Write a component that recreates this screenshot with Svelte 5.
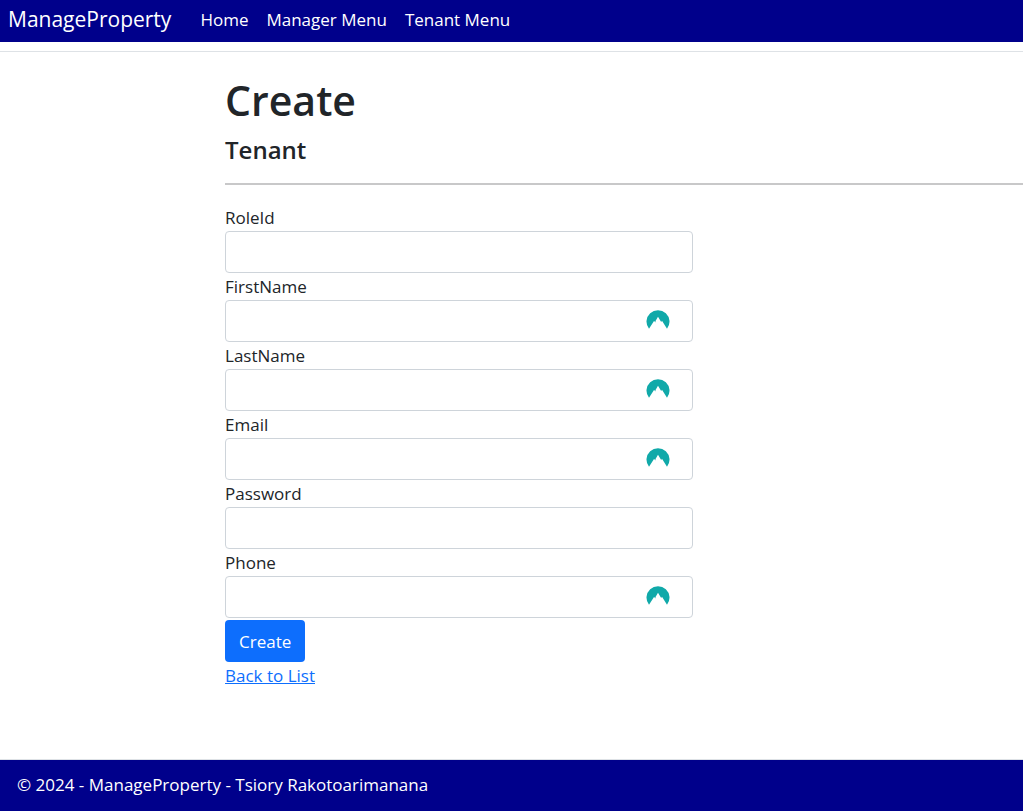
<script>
  const links = ['Home', 'Manager Menu', 'Tenant Menu'];
  const fields = [
    { name: 'RoleId', type: 'text', badge: false },
    { name: 'FirstName', type: 'text', badge: true },
    { name: 'LastName', type: 'text', badge: true },
    { name: 'Email', type: 'email', badge: true },
    { name: 'Password', type: 'password', badge: false },
    { name: 'Phone', type: 'tel', badge: true }
  ];
</script>

<div class="page">
  <header>
    <nav>
      <a class="brand" href="#home">ManageProperty</a>
      {#each links as link}
        <a class="nav-link" href="#{link.replace(' ', '-')}">{link}</a>
      {/each}
    </nav>
  </header>

  <main>
    <h1>Create</h1>
    <h4>Tenant</h4>
    <hr />
    <form onsubmit={(e) => e.preventDefault()}>
      {#each fields as field}
        <div class="field">
          <label for={field.name}>{field.name}</label>
          <div class="control">
            <input id={field.name} name={field.name} type={field.type} autocomplete="off" />
            {#if field.badge}
              <svg class="badge" viewBox="0 0 24 20" aria-hidden="true">
                <path
                  fill="#10a9a9"
                  d="M3 18.800A11.500 11.500 0 1 1 21 18.800L16 10.800 15.200 12 12 6.800 9.400 11.200 9.800 12.600 8 11Z"
                />
              </svg>
            {/if}
          </div>
        </div>
      {/each}
      <button type="submit">Create</button>
    </form>
    <a class="back" href="#list">Back to List</a>
  </main>

  <footer>© 2024 - ManageProperty - Tsiory Rakotoarimanana</footer>
</div>

<style>
  :global(body) {
    margin: 0;
    background: #fff;
  }

  .page {
    display: flex;
    flex-direction: column;
    min-height: 100vh;
    color: #212529;
    font-family: 'Segoe UI', 'Open Sans', 'Noto Sans', sans-serif;
    font-size: 17px;
    line-height: 27px;
  }

  header {
    padding-bottom: 9px;
    border-bottom: 1px solid #dee2e6;
  }

  nav {
    display: flex;
    align-items: center;
    gap: 18px;
    height: 42px;
    padding: 0 8px 3px;
    background: #00008b;
    box-sizing: border-box;
  }

  nav a {
    color: #fff;
    text-decoration: none;
    white-space: nowrap;
  }

  .brand {
    margin-right: 11px;
    font-size: 21px;
  }

  main {
    flex: 1;
    padding: 22px 0 64px 22%;
  }

  h1,
  h4 {
    margin: 0;
    font-weight: 600;
  }

  h1 {
    margin-bottom: 8px;
    font-size: 41px;
    line-height: 52px;
  }

  h4 {
    font-size: 24px;
    line-height: 32px;
  }

  hr {
    height: 2px;
    margin: 17px 0 19px;
    border: 0;
    background: #c8c8c9;
  }

  form {
    max-width: 468px;
  }

  label {
    display: block;
    width: fit-content;
  }

  .control {
    position: relative;
  }

  input {
    display: block;
    width: 100%;
    height: 42px;
    padding: 6px 14px;
    border: 1px solid #ced4da;
    border-radius: 4px;
    background: #fff;
    color: inherit;
    font: inherit;
    box-sizing: border-box;
  }

  .badge {
    position: absolute;
    top: 10px;
    right: 23px;
    width: 24px;
    height: 20px;
  }

  button {
    display: block;
    height: 42px;
    margin-top: 2px;
    padding: 0 14px;
    border: 0;
    border-radius: 4px;
    background: #0d6efd;
    color: #fff;
    font: inherit;
  }

  .back {
    color: #0d6efd;
    text-decoration: underline;
  }

  footer {
    padding: 11px 17px 13px;
    border-top: 1px solid #dee2e6;
    background: #00008b;
    color: #fff;
  }
</style>
